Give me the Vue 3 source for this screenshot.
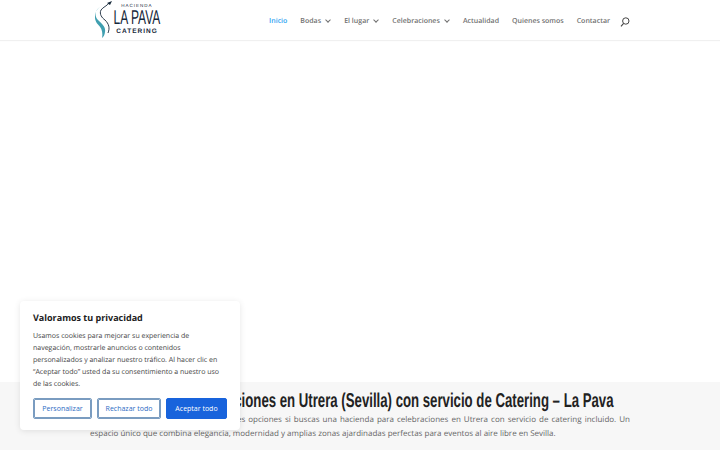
<template>
  <div class="page">
    <header class="header">
      <div class="container bar">
        <a class="logo" href="#">
          <svg width="20" height="38" viewBox="0 0 20 38" class="logo-mark">
            <path d="M5 7 C0 10 -1 16 3 20 C7 24 11 27 10 32 C9.7 35 8.5 37 7 38 C8 33 7 28 3 24.5 C-1 20.5 -2 12 5 7 Z" fill="#3f9fb0" />
            <path d="M14 3 C12 6 8 7 6 10 C4 14 7 18 10 20 C14 24 15 28 13 33" fill="none" stroke="#16283a" stroke-width=".9" />
            <path d="M12 3 L17 1 L15 5 Z" fill="#16283a" />
          </svg>
          <div class="logo-text">
            <span class="logo-small">HACIENDA</span>
            <span class="logo-big">LA PAVA</span>
            <span class="logo-cat">CATERING</span>
          </div>
        </a>
        <nav class="nav">
          <a class="active" href="#">Inicio</a>
          <a href="#">Bodas <i class="chev"></i></a>
          <a href="#">El lugar <i class="chev"></i></a>
          <a href="#">Celebraciones <i class="chev"></i></a>
          <a href="#">Actualidad</a>
          <a href="#">Quienes somos</a>
          <a href="#">Contactar</a>
          <svg class="search" width="10" height="10" viewBox="0 0 10 10">
            <circle cx="5.8" cy="4" r="3.2" fill="none" stroke="#444" stroke-width="1" />
            <path d="M3.6 6.4 L1 9.4" stroke="#444" stroke-width="1.1" fill="none" />
          </svg>
        </nav>
      </div>
    </header>

    <div class="hero"></div>

    <section class="intro">
      <div class="container">
        <h1><span>Hacienda de celebraciones en Utrera (Sevilla) con servicio de Catering – La Pava</span></h1>
        <p>Hacienda La Pava es una de las mejores opciones si buscas una hacienda para celebraciones en Utrera con servicio de catering incluido. Un espacio único que combina elegancia, modernidad y amplias zonas ajardinadas perfectas para eventos al aire libre en Sevilla.</p>
      </div>
    </section>

    <div class="cookie">
      <h2>Valoramos tu privacidad</h2>
      <p>Usamos cookies para mejorar su experiencia de navegación, mostrarle anuncios o contenidos personalizados y analizar nuestro tráfico. Al hacer clic en “Aceptar todo” usted da su consentimiento a nuestro uso de las cookies.</p>
      <div class="buttons">
        <button class="ghost">Personalizar</button>
        <button class="ghost">Rechazar todo</button>
        <button class="accept">Aceptar todo</button>
      </div>
    </div>
  </div>
</template>

<script setup>
</script>

<style>
html, body {
  margin: 0;
  overflow: hidden;
  background: #fff;
}
</style>

<style scoped>
.page {
  height: 450px;
  overflow: hidden;
  font-family: "Open Sans", sans-serif;
  text-rendering: geometricPrecision;
  position: relative;
}

.header {
  height: 40px;
  box-shadow: 0 1px 1px rgba(0, 0, 0, .06);
  position: relative;
}

.container {
  width: 540px;
  margin: 0 auto;
}

.bar {
  display: flex;
  justify-content: space-between;
  height: 40px;
  overflow: hidden;
}

.logo {
  display: flex;
  margin-left: 5px;
  color: #16283a;
  text-decoration: none;
}

.logo-text {
  width: 46px;
  display: flex;
  flex-direction: column;
  align-items: center;
  margin-left: -1px;
  font-family: "Liberation Sans", sans-serif;
  white-space: nowrap;
}

.logo-small {
  font-size: 4.5px;
  letter-spacing: 1px;
  line-height: 6px;
  margin-top: 3px;
}

.logo-big {
  font-size: 20px;
  line-height: 19px;
  transform: scaleX(.6);
}

.logo-cat {
  font-size: 6.5px;
  font-weight: 700;
  letter-spacing: 1px;
  line-height: 8px;
}

.nav {
  display: flex;
  align-items: center;
  gap: 13px;
  font-size: 7px;
  font-weight: 600;
  padding-top: 3px;
}

.nav a {
  color: #707070;
  text-decoration: none;
  white-space: nowrap;
}

.nav a.active {
  color: #2ea3f2;
}

.chev {
  display: inline-block;
  width: 3px;
  height: 3px;
  margin: 0 1.3px 1px 3px;
  border-right: 1px solid #707070;
  border-bottom: 1px solid #707070;
  transform: rotate(45deg);
}

.search {
  margin-left: -3px;
}

.hero {
  height: 342px;
}

.intro {
  height: 68px;
  background: #f7f7f7;
}

.intro h1 {
  display: flex;
  justify-content: center;
  margin: 0;
  padding-top: 7px;
  font-family: "Liberation Sans", sans-serif;
  font-size: 20px;
  font-weight: 700;
  line-height: 24px;
  white-space: nowrap;
  color: #222;
}

.intro h1 span {
  flex: none;
  transform: scaleX(.66);
}

.intro p {
  margin: 0;
  font-size: 8px;
  line-height: 14px;
  text-align: justify;
  color: #666;
}

.cookie {
  position: absolute;
  left: 20px;
  bottom: 20px;
  width: 220px;
  height: 129px;
  box-sizing: border-box;
  padding: 10px 13px;
  background: #fff;
  border-radius: 4px;
  box-shadow: 0 1px 6px rgba(0, 0, 0, .1);
}

.cookie h2 {
  margin: 0 0 5.5px;
  font-size: 9px;
  font-weight: 700;
  line-height: 14px;
  color: #212121;
}

.cookie p {
  margin: 0 0 7.5px;
  font-size: 7px;
  line-height: 12px;
  color: #444;
}

.buttons {
  display: flex;
  gap: 5px;
}

.buttons button {
  height: 21px;
  padding: 0;
  font-family: inherit;
  font-size: 7px;
  border-radius: 2px;
  cursor: pointer;
}

.ghost {
  background: #fff;
  border: 1px solid #7a9cc0;
  outline: 1px solid #7a9cc0;
  outline-offset: -2px;
  color: #2d6cc4;
}

.ghost:first-child {
  width: 59px;
}

.ghost:nth-child(2) {
  width: 64px;
}

.accept {
  width: 61px;
  background: #1863dc;
  border: 1px solid #1863dc;
  color: #fff;
}
</style>
